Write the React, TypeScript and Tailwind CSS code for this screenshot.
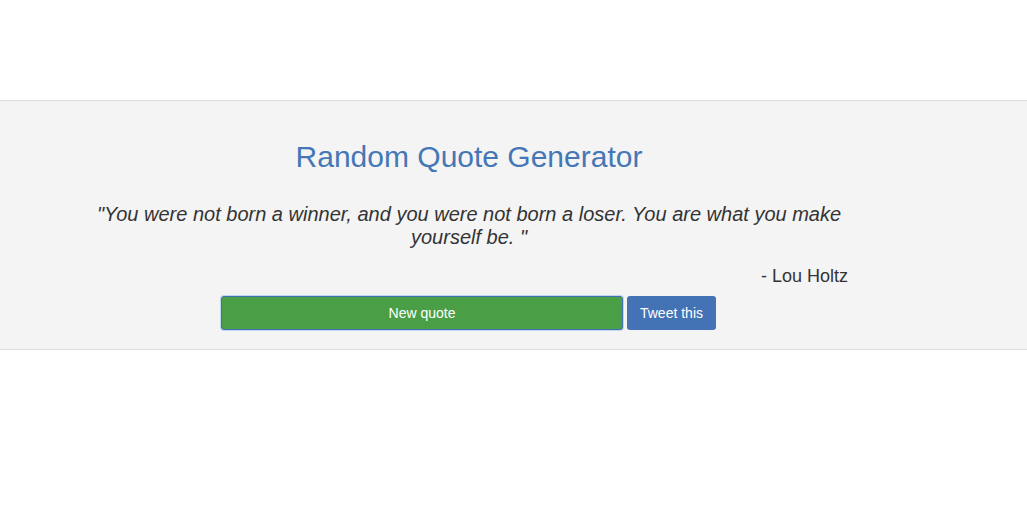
export default function App() {
  return (
    <div className="min-h-[511px] bg-white font-['Liberation_Sans',Arial,sans-serif] text-[#333]">
      <div className="h-[100px]" />
      <section className="border-y border-[#dddddd] bg-[#f4f4f4]">
        <div className="ml-[90px] w-[758px] pt-[39px] pb-[19px]">
          <h1 className="text-center text-[30px] leading-[33px] text-[#4577b6]">
            Random Quote Generator
          </h1>
          <p className="mt-[30px] text-center text-[20px] italic leading-[23px]">
            "You were not born a winner, and you were not born a loser. You are what you make yourself be. "
          </p>
          <p className="mt-[16px] text-right text-[18px] leading-[22px]">- Lou Holtz</p>
          <div className="mt-[9px] flex gap-[4px] pl-[131px] text-[14px] text-white">
            <button className="h-[34px] w-[402px] rounded-[3px] border border-[#3f72b0] bg-[#4a9f46] shadow-[0_0_0_1px_#c4d6ee]">
              New quote
            </button>
            <button className="h-[34px] w-[89px] rounded-[3px] bg-[#4473b5]">Tweet this</button>
          </div>
        </div>
      </section>
    </div>
  );
}
